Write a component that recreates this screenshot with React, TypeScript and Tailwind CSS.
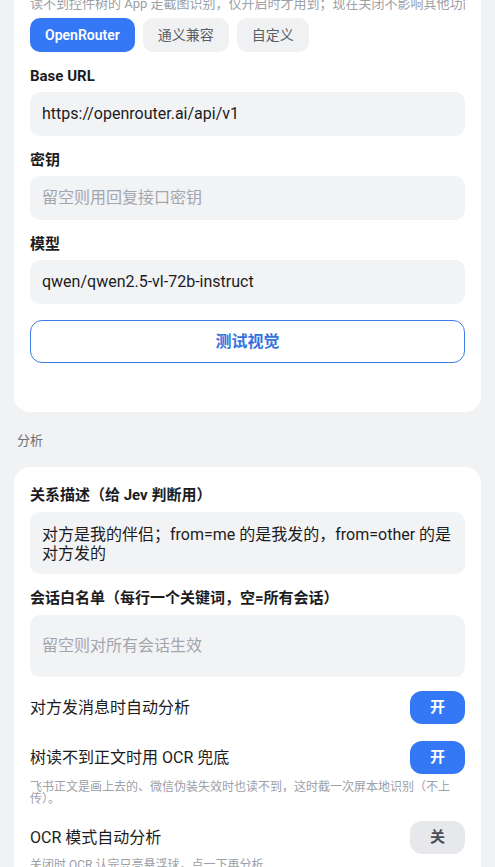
import { useState } from "react";

const fontStack = "font-['Roboto','Noto_Sans_CJK_SC',sans-serif]";

const providers = ["OpenRouter", "通义兼容", "自定义"];

function Field({
  label,
  value,
  placeholder,
}: {
  label: string;
  value?: string;
  placeholder?: string;
}) {
  return (
    <div className="mt-[14px] first:mt-[15px]">
      <div className="text-[15px] font-bold leading-[20px] text-[#1c1c1e]">
        {label}
      </div>
      <div className="mt-[6px] flex h-[44px] items-center rounded-[10px] bg-[#f2f3f5] px-3 text-[16px]">
        {value ? (
          <span className="text-[#1c1c1e]">{value}</span>
        ) : (
          <span className="text-[#a3a6ad]">{placeholder}</span>
        )}
      </div>
    </div>
  );
}

function Toggle({ on }: { on: boolean }) {
  return (
    <button
      type="button"
      className={
        on
          ? "h-[33px] w-[55px] shrink-0 rounded-[12px] bg-[#3478f6] text-[15px] font-bold text-white"
          : "h-[33px] w-[55px] shrink-0 rounded-[12px] bg-[#e6e8eb] text-[15px] font-bold text-[#4b5058]"
      }
    >
      {on ? "开" : "关"}
    </button>
  );
}

export default function App() {
  const [provider, setProvider] = useState("OpenRouter");

  return (
    <main
      className={`${fontStack} h-[867px] overflow-hidden bg-[#f1f2f4] px-[14px]`}
    >
      <section className="-mt-[21px] rounded-[16px] bg-white px-4 pb-[49px] pt-4">
        <p className="overflow-hidden whitespace-nowrap text-[13px] leading-[18px] text-[#9ca0a7]">
          读不到控件树的 App 走截图识别，仅开启时才用到；现在关闭不影响其他功能
        </p>

        <div className="mt-[5px] flex gap-2">
          {providers.map((name) => (
            <button
              key={name}
              type="button"
              onClick={() => setProvider(name)}
              className={
                provider === name
                  ? "h-[34px] rounded-[10px] bg-[#3478f6] px-[15px] text-[14px] font-semibold text-white"
                  : "h-[34px] rounded-[10px] bg-[#f0f1f3] px-[15px] text-[14px] text-[#5b5f66]"
              }
            >
              {name}
            </button>
          ))}
        </div>

        <Field label="Base URL" value="https://openrouter.ai/api/v1" />
        <Field label="密钥" placeholder="留空则用回复接口密钥" />
        <Field label="模型" value="qwen/qwen2.5-vl-72b-instruct" />

        <button
          type="button"
          className="mt-4 h-[43px] w-full rounded-[12px] border border-[#3d7be8] text-[16px] font-bold text-[#3573e0]"
        >
          测试视觉
        </button>
      </section>

      <h2 className="mt-5 px-[3px] text-[13px] leading-[18px] text-[#6b6f76]">
        分析
      </h2>

      <section className="mt-[17px] rounded-[16px] bg-white px-4 pb-6 pt-[18px]">
        <div className="text-[15px] font-bold leading-[20px] text-[#1c1c1e]">
          关系描述（给 Jev 判断用）
        </div>
        <div className="mt-[7px] rounded-[10px] bg-[#f2f3f5] px-3 pb-[11px] pt-[13px] text-[16px] leading-[19px] text-[#1c1c1e]">
          对方是我的伴侣；from=me 的是我发的，from=other 的是对方发的
        </div>

        <div className="mt-[14px] text-[15px] font-bold leading-[20px] text-[#1c1c1e]">
          会话白名单（每行一个关键词，空=所有会话）
        </div>
        <div className="mt-[7px] flex h-[62px] items-center rounded-[10px] bg-[#f2f3f5] px-3 text-[16px] text-[#a3a6ad]">
          留空则对所有会话生效
        </div>

        <div className="mt-[14px] flex items-center justify-between">
          <span className="text-[16px] text-[#1c1c1e]">对方发消息时自动分析</span>
          <Toggle on />
        </div>

        <div className="mt-[17px] flex items-center justify-between">
          <span className="text-[16px] text-[#1c1c1e]">
            树读不到正文时用 OCR 兜底
          </span>
          <Toggle on />
        </div>
        <p className="mt-[7px] text-[12px] leading-[12px] text-[#9ca0a7]">
          飞书正文是画上去的、微信伪装失效时也读不到，这时截一次屏本地识别（不上传）。
        </p>

        <div className="mt-4 flex items-center justify-between">
          <span className="text-[16px] text-[#1c1c1e]">OCR 模式自动分析</span>
          <Toggle on={false} />
        </div>
        <p className="mt-[5px] text-[12px] leading-[12px] text-[#9ca0a7]">
          关闭时 OCR 认完只亮悬浮球，点一下再分析
        </p>
      </section>
    </main>
  );
}
